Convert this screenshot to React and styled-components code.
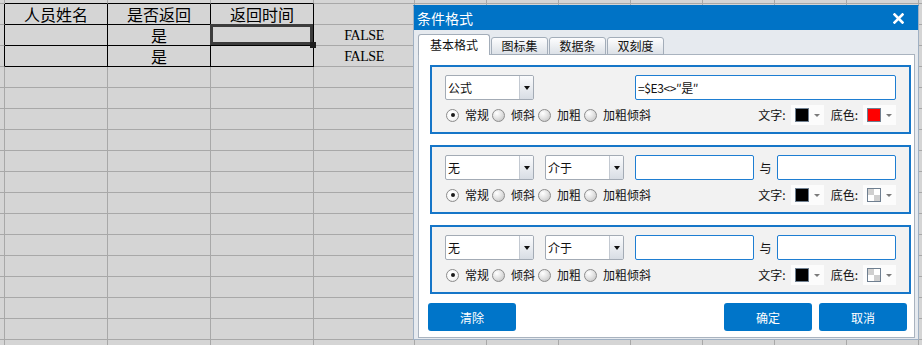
import React from 'react';
import styled, { createGlobalStyle, css } from 'styled-components';

const GlobalStyle = createGlobalStyle`
  html, body { margin: 0; padding: 0; }
  body {
    width: 922px; height: 345px; overflow: hidden; background: #d5d5d5;
    font-family: "Noto Sans CJK SC", "Noto Sans", sans-serif;
  }
  * { box-sizing: border-box; }
`;

const Screen = styled.div`
  position: relative;
  width: 922px;
  height: 345px;
  overflow: hidden;
  background: #d5d5d5;
`;

/* ---------- spreadsheet ---------- */
const COLS = [5, 103, 103, 103, 101, 72, 72, 72, 72, 72, 72, 72, 72];
const ROW_COUNT = 18;

const Sheet = styled.div`
  display: grid;
  grid-template-columns: ${COLS.map((c) => c + 'px').join(' ')};
  grid-template-rows: 4px;
  grid-auto-rows: 21px;
`;

const Cell = styled.div`
  position: relative;
  display: flex;
  align-items: center;
  justify-content: center;
  border-right: 1px solid ${(p) => (p.$edgeR ? '#000' : '#a8a8a8')};
  border-bottom: 1px solid ${(p) => (p.$edgeB ? '#000' : '#a8a8a8')};
  font-family: "Noto Sans CJK SC", sans-serif;
  font-size: 16px;
  line-height: 1;
  color: #000;
  ${(p) =>
    p.$selected &&
    css`
      z-index: 1;
      &::after {
        content: '';
        position: absolute;
        left: -1px;
        top: -1px;
        right: 0;
        bottom: 0;
        border: 3px solid #3c3c3c;
      }
      &::before {
        content: '';
        position: absolute;
        right: -3px;
        bottom: -3px;
        width: 6px;
        height: 6px;
        background: #1e1e1e;
        z-index: 2;
      }
    `}
`;

const BoolText = styled.span`
  font-family: "Liberation Serif", serif;
  font-size: 14px;
  letter-spacing: -0.4px;
  margin-top: 1px;
`;

const SHEET_TEXT = {
  '1-1': '人员姓名',
  '1-2': '是否返回',
  '1-3': '返回时间',
  '2-2': '是',
  '3-2': '是',
};
const BOOL_CELLS = { '2-4': 'FALSE', '3-4': 'FALSE' };

function Spreadsheet() {
  const cells = [];
  for (let r = 0; r < ROW_COUNT; r++) {
    for (let c = 0; c < COLS.length; c++) {
      const key = `${r}-${c}`;
      const edgeR = r >= 1 && r <= 3 && c <= 3;
      const edgeB = c >= 1 && c <= 3 && r <= 3;
      cells.push(
        <Cell key={key} $edgeR={edgeR} $edgeB={edgeB} $selected={key === '2-3'}>
          {SHEET_TEXT[key]}
          {BOOL_CELLS[key] && <BoolText>{BOOL_CELLS[key]}</BoolText>}
        </Cell>
      );
    }
  }
  return <Sheet>{cells}</Sheet>;
}

/* ---------- dialog ---------- */
const Dialog = styled.div`
  position: absolute;
  left: 413px;
  top: 5px;
  width: 506px;
  height: 335px;
  display: flex;
  flex-direction: column;
  background: #e6eaef;
  border: 1px solid #9fb0c3;
  border-top-color: #0073c6;
`;

const TitleBar = styled.div`
  height: 24px;
  flex: none;
  display: flex;
  align-items: center;
  justify-content: space-between;
  padding: 0 14px 0 3px;
  background: #0073c6;
  color: #fff;
  font-size: 14px;
`;

const TitleText = styled.span`
  line-height: 1;
  margin-top: -1px;
`;

const TabStrip = styled.div`
  height: 25px;
  flex: none;
  display: flex;
  align-items: flex-end;
  padding-left: 4px;
  margin-bottom: -1px;
`;

const Tab = styled.div`
  position: relative;
  z-index: 1;
  display: flex;
  align-items: center;
  justify-content: center;
  margin-left: ${(p) => (p.$first ? 0 : 1)}px;
  width: ${(p) => (p.$active ? 72 : 57)}px;
  height: ${(p) => (p.$active ? 21 : 18)}px;
  border: 1px solid #a3adb9;
  border-bottom: ${(p) => (p.$active ? 'none' : '1px solid #a3adb9')};
  border-radius: 3px 3px 0 0;
  background: ${(p) => (p.$active ? '#fff' : 'linear-gradient(#fdfdfe, #dce1e7)')};
  font-size: 12px;
  line-height: 1;
  color: #111;
  padding-bottom: ${(p) => (p.$active ? 0 : 1)}px;
`;

const Panel = styled.div`
  flex: 1;
  margin: 0 3px 1px 4px;
  background: #fff;
  border: 1px solid #a9b3bf;
  display: flex;
  flex-direction: column;
  padding-top: 10px;
`;

const Sections = styled.div`
  display: flex;
  flex-direction: column;
  gap: 11px;
  padding-left: 11px;
`;

const Section = styled.div`
  width: 481px;
  height: 69px;
  border: 2px solid #1676c8;
  background: #f2f2f2;
  padding: 8px 13px 0 13px;
`;

const FieldRow = styled.div`
  display: grid;
  grid-template-columns: 89px 11px 79px 11px 119px 23px 119px;
  height: 25px;
`;

const SelectBox = styled.div`
  grid-column: ${(p) => p.$col};
  display: flex;
  height: 25px;
  background: #fff;
  border: 1px solid #a3abb5;
  border-radius: 2px;
  overflow: hidden;
`;

const SelectValue = styled.span`
  flex: 1;
  display: flex;
  align-items: center;
  padding-left: 2px;
  font-size: 12px;
  color: #111;
`;

const DropButton = styled.span`
  width: 14px;
  flex: none;
  display: flex;
  align-items: center;
  justify-content: center;
  border-left: 1px solid #c3c9d1;
  background: linear-gradient(#fbfcfd, #d8dde4);
  &::after {
    content: '';
    border-left: 3.5px solid transparent;
    border-right: 3.5px solid transparent;
    border-top: 4px solid #111;
  }
`;

const TextBox = styled.input`
  grid-column: ${(p) => p.$col};
  height: 25px;
  min-width: 0;
  margin: 0;
  padding: 0 2px;
  background: #fff;
  border: 1px solid #1e7ed2;
  border-radius: 2px;
  outline: none;
  font-family: "Noto Sans CJK SC", sans-serif;
  font-size: 12px;
  letter-spacing: -0.4px;
  color: #111;
`;

const AndText = styled.span`
  grid-column: 6;
  display: flex;
  align-items: center;
  justify-content: center;
  font-size: 12px;
  color: #111;
`;

const OptionRow = styled.div`
  margin-top: 5px;
  height: 20px;
  display: flex;
  align-items: center;
  justify-content: space-between;
`;

const RadioGroup = styled.div`
  display: flex;
  align-items: center;
  gap: 3px;
  margin-left: 1px;
`;

const RadioItem = styled.label`
  display: flex;
  align-items: center;
  gap: 6px;
  font-size: 12px;
  line-height: 1;
  color: #111;
`;

const RadioDot = styled.span`
  position: relative;
  width: 13px;
  height: 13px;
  flex: none;
  border-radius: 50%;
  border: 1px solid #8d8d8d;
  background: ${(p) =>
    p.$checked
      ? 'radial-gradient(circle at 40% 35%, #ffffff 0, #f6f6f6 60%, #dcdcdc 100%)'
      : 'radial-gradient(circle at 35% 30%, #ffffff 0, #e4e4e4 45%, #bdbdbd 100%)'};
  ${(p) =>
    p.$checked &&
    css`
      &::after {
        content: '';
        position: absolute;
        left: 3.5px;
        top: 3.5px;
        width: 4px;
        height: 4px;
        border-radius: 50%;
        background: #1a1a1a;
      }
    `}
`;

const ColorGroup = styled.div`
  display: flex;
  align-items: center;
`;

const ColorLabel = styled.span`
  font-size: 12px;
  line-height: 1;
  color: #111;
  margin: 0 5px 0 ${(p) => (p.$gap ? 7 : 0)}px;
`;

const SwatchButton = styled.span`
  width: 33px;
  height: 20px;
  display: flex;
  align-items: center;
  padding-left: 4px;
  background: #fcfcfc;
  &::after {
    content: '';
    margin-left: 5px;
    border-left: 3px solid transparent;
    border-right: 3px solid transparent;
    border-top: 3.5px solid #7a7a7a;
  }
`;

const Swatch = styled.span`
  width: 14px;
  height: 14px;
  border: 1px solid #6f7f90;
  background: ${(p) =>
    p.$color
      ? p.$color
      : 'conic-gradient(#ffffff 0 25%, #cfcfcf 0 50%, #ffffff 0 75%, #cfcfcf 0)'};
`;

const ButtonRow = styled.div`
  display: flex;
  gap: 7px;
  margin-top: 9px;
  padding: 0 7px 0 9px;
`;

const ActionButton = styled.button`
  width: 88px;
  height: 28px;
  margin: 0 ${(p) => (p.$push ? 'auto' : '0')} 0 0;
  padding: 0;
  border: none;
  border-radius: 3px;
  background: #0075c9;
  color: #fff;
  font-family: "Noto Sans CJK SC", sans-serif;
  font-size: 12px;
`;

function CloseIcon() {
  return (
    <svg width="11" height="11" viewBox="0 0 11 11">
      <path d="M1.5 1.5 L9.5 9.5 M9.5 1.5 L1.5 9.5" stroke="#fff" strokeWidth="2.6" strokeLinecap="square" />
    </svg>
  );
}

function Select({ col, value }) {
  return (
    <SelectBox $col={col}>
      <SelectValue>{value}</SelectValue>
      <DropButton />
    </SelectBox>
  );
}

const STYLES = ['常规', '倾斜', '加粗', '加粗倾斜'];

function Options({ bg }) {
  return (
    <OptionRow>
      <RadioGroup>
        {STYLES.map((s, i) => (
          <RadioItem key={s}>
            <RadioDot $checked={i === 0} />
            {s}
          </RadioItem>
        ))}
      </RadioGroup>
      <ColorGroup>
        <ColorLabel>文字:</ColorLabel>
        <SwatchButton>
          <Swatch $color="#000" />
        </SwatchButton>
        <ColorLabel $gap>底色:</ColorLabel>
        <SwatchButton>
          <Swatch $color={bg} />
        </SwatchButton>
      </ColorGroup>
    </OptionRow>
  );
}

function RangeSection() {
  return (
    <Section>
      <FieldRow>
        <Select col="1" value="无" />
        <Select col="3" value="介于" />
        <TextBox $col="5" readOnly defaultValue="" />
        <AndText>与</AndText>
        <TextBox $col="7" readOnly defaultValue="" />
      </FieldRow>
      <Options />
    </Section>
  );
}

export default function App() {
  return (
    <Screen>
      <GlobalStyle />
      <Spreadsheet />
      <Dialog>
        <TitleBar>
          <TitleText>条件格式</TitleText>
          <CloseIcon />
        </TitleBar>
        <TabStrip>
          <Tab $active $first>基本格式</Tab>
          <Tab>图标集</Tab>
          <Tab>数据条</Tab>
          <Tab>双刻度</Tab>
        </TabStrip>
        <Panel>
          <Sections>
            <Section>
              <FieldRow>
                <Select col="1" value="公式" />
                <TextBox $col="5 / span 3" readOnly defaultValue={'=$E3<>\u2033是\u2033'} />
              </FieldRow>
              <Options bg="#ff0000" />
            </Section>
            <RangeSection />
            <RangeSection />
          </Sections>
          <ButtonRow>
            <ActionButton $push>清除</ActionButton>
            <ActionButton>确定</ActionButton>
            <ActionButton>取消</ActionButton>
          </ButtonRow>
        </Panel>
      </Dialog>
    </Screen>
  );
}
